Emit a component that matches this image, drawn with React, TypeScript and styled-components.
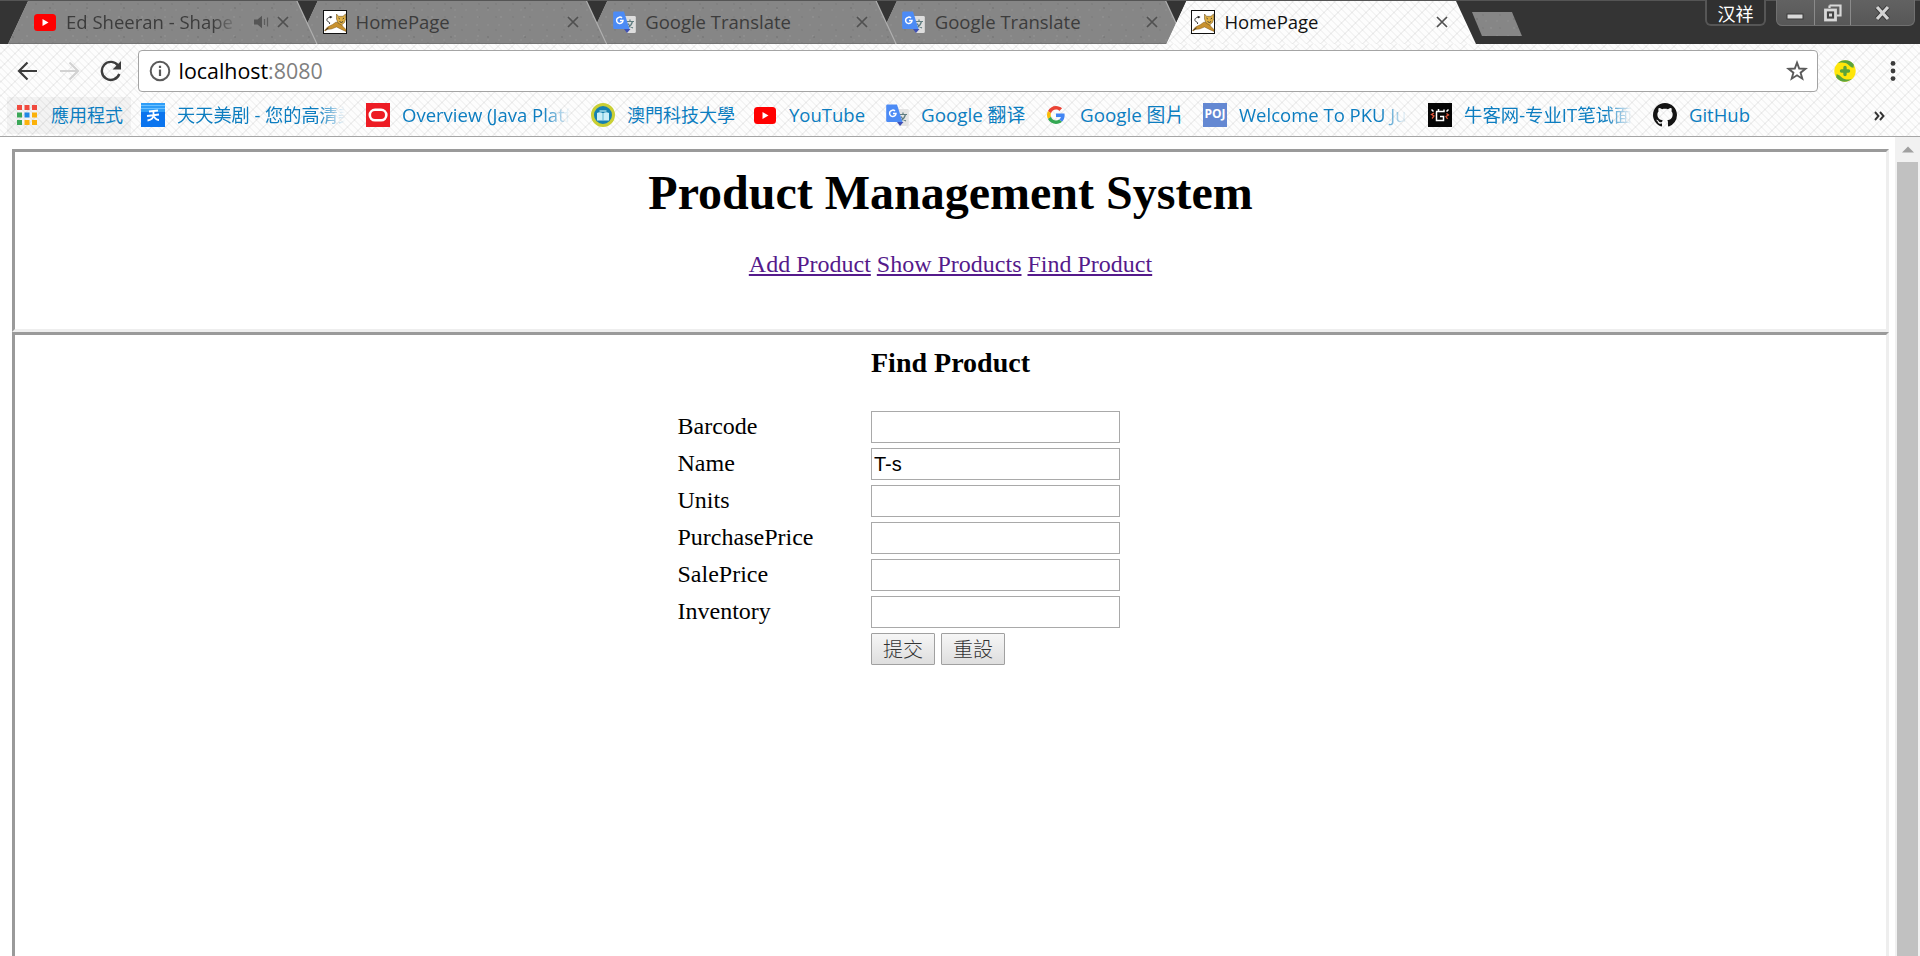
import React from 'react';
import styled, { createGlobalStyle, css } from 'styled-components';

const uiFont = `"Open Sans", "Noto Sans CJK TC", sans-serif`;

const weave = css`
  background-color: #fdfdfd;
  background-image:
    repeating-linear-gradient(45deg, transparent 0 3.8px, rgba(0, 0, 0, 0.035) 3.8px 4.95px),
    repeating-linear-gradient(-45deg, transparent 0 8.6px, rgba(0, 0, 0, 0.05) 8.6px 9.9px);
`;

const stone = css`
  background-color: #868686;
  background-image:
    radial-gradient(circle at 5px 7px, rgba(40, 40, 40, 0.25) 0, transparent 1.3px),
    radial-gradient(circle at 19px 16px, rgba(225, 225, 225, 0.15) 0, transparent 1.6px),
    radial-gradient(circle at 11px 3px, rgba(50, 50, 50, 0.14) 0, transparent 1.4px),
    radial-gradient(circle at 3px 9px, rgba(230, 230, 230, 0.1) 0, transparent 1.6px);
  background-size: 37px 29px, 23px 19px, 17px 13px, 11px 15px;
`;

const GlobalStyle = createGlobalStyle`
  * { box-sizing: border-box; }
  body { margin: 0; background: #fff; overflow: hidden; }
`;

const Window = styled.div`
  display: flex;
  flex-direction: column;
  width: 1920px;
  height: 956px;
  overflow: hidden;
  font-family: ${uiFont};
`;

const TitleBar = styled.header`
  display: flex;
  height: 44px;
  padding-left: 8px;
  background: #343434;
  border-top: 1px solid #555;
`;

const TabShape = styled.div<{ $active?: boolean; $order: number }>`
  position: relative;
  z-index: ${(p) => p.$order};
  flex: none;
  width: 309.6px;
  height: 43px;
  margin-right: -20px;
  padding: 0 1.3px 0 0;
  background: ${(p) => (p.$active ? '#fdfdfd' : '#b0b0b0')};
  clip-path: polygon(0 100%, 20px 0, calc(100% - 20px) 0, 100% 100%);
`;

const TabFace = styled.div<{ $active?: boolean }>`
  display: flex;
  align-items: center;
  height: 100%;
  padding: 0 27px 0 24px;
  color: ${(p) => (p.$active ? '#111' : '#3c3c3c')};
  clip-path: polygon(0 100%, 20px 0, calc(100% - 20px) 0, 100% 100%);
  ${(p) => (p.$active ? weave : stone)}
  border-bottom: 1px solid ${(p) => (p.$active ? 'transparent' : '#757575')};
`;

const TabTitle = styled.span<{ $fade?: boolean }>`
  flex: 1;
  margin-left: 8px;
  font-size: 18.5px;
  line-height: 28px;
  white-space: nowrap;
  ${(p) => p.$fade && 'mask-image: linear-gradient(90deg, #000 82%, transparent 97%);'}
`;

const Slot = styled.span<{ $w: number }>`
  display: flex;
  flex: none;
  align-items: center;
  justify-content: center;
  width: ${(p) => p.$w}px;
`;

const NewTab = styled.div`
  width: 50px;
  height: 24px;
  margin: 11px 0 0 16px;
  clip-path: polygon(0 0, 40px 0, 100% 100%, 10px 100%);
  ${stone}
`;

const WindowButtons = styled.div`
  display: flex;
  align-items: flex-start;
  gap: 10px;
  margin: -1px 5px 0 auto;
`;

const UserButton = styled.div`
  width: 61px;
  height: 26px;
  border: 2px solid #565656;
  border-top: 0;
  border-radius: 0 0 6px 6px;
  background: #303030;
  color: #fff;
  font: 18px/27px "Noto Sans CJK SC", sans-serif;
  text-align: center;
`;

const ControlGroup = styled.div`
  display: flex;
  width: 139px;
  height: 26px;
  border: 1px solid #707070;
  border-top: 0;
  border-radius: 0 0 6px 6px;
  overflow: hidden;
  background: linear-gradient(#626262, #575757);
`;

const Control = styled.div<{ $w: number }>`
  display: flex;
  align-items: center;
  justify-content: center;
  width: ${(p) => p.$w}px;
  & + & {
    border-left: 1px solid #8a8a8a;
  }
`;

const Chrome = styled.section`
  flex: none;
  height: 93px;
  border-bottom: 1px solid #a6a6a6;
  ${weave}
`;

const Toolbar = styled.div`
  display: flex;
  align-items: center;
  height: 54px;
  padding-left: 6px;
`;

const NavButton = styled.span`
  display: flex;
  justify-content: center;
  width: 42px;
`;

const Omnibox = styled.div`
  display: flex;
  align-items: center;
  width: 1680px;
  height: 42px;
  margin-left: 6px;
  padding: 0 9px 0 10px;
  border: 1px solid #a4a4a4;
  border-radius: 4px;
  background: #fff;
`;

const Address = styled.span`
  flex: 1;
  margin-left: 7.5px;
  color: #000;
  font-size: 21.4px;
  line-height: 30px;
  small {
    color: #808080;
    font-size: inherit;
  }
`;

const BookmarkBar = styled.nav`
  display: flex;
  align-items: center;
  height: 34px;
  padding-left: 7px;
`;

const AppsButton = styled.div`
  display: flex;
  align-items: center;
  gap: 14px;
  width: 124px;
  height: 37px;
  margin-right: 10px;
  padding-left: 10px;
  background: rgba(0, 0, 0, 0.04);
  color: #0c7dc0;
  font-size: 18px;
  line-height: 26px;
`;

const Bookmark = styled.div<{ $w: number }>`
  display: flex;
  flex: none;
  align-items: center;
  gap: 12px;
  width: ${(p) => p.$w}px;
`;

const BookmarkTitle = styled.span<{ $size?: number; $fade?: boolean }>`
  max-width: 168px;
  color: #0c7dc0;
  font-size: ${(p) => p.$size ?? 18.5}px;
  line-height: 26px;
  white-space: nowrap;
  ${(p) => p.$fade && 'mask-image: linear-gradient(90deg, #000 84%, transparent 100%);'}
`;

const More = styled.span`
  margin: 0 35px 0 auto;
`;

const Viewport = styled.main`
  display: flex;
  flex: 1;
  min-height: 0;
`;

const Page = styled.div`
  display: flex;
  flex: 1;
  flex-direction: column;
  padding: 12px 6px 0 12px;
  color: #000;
  font-family: 'Liberation Serif', serif;
`;

const Frame = styled.section<{ $h: number }>`
  flex: none;
  height: ${(p) => p.$h}px;
  padding: 12px;
  border: 3px solid;
  border-color: #9a9a9a #eee #eee #9a9a9a;
`;

const PageTitle = styled.h1`
  margin: 1px 0 31px;
  font-size: 48px;
  line-height: 55px;
  text-align: center;
`;

const Links = styled.div`
  font-size: 24px;
  line-height: 27px;
  text-align: center;
  a {
    color: #551a8b;
    text-decoration: underline;
  }
`;

const Form = styled.form`
  display: grid;
  grid-template-columns: 193.5px 249px;
  gap: 5px 0;
  margin-left: 650.5px;
`;

const FormTitle = styled.h3`
  grid-column: 2;
  margin: 0 0 28px;
  font-size: 28px;
  line-height: 31px;
`;

const Label = styled.label`
  font-size: 24px;
  line-height: 31px;
`;

const Field = styled.input`
  width: 249px;
  height: 32px;
  padding: 1px 2px;
  border: 1px solid #a9a9a9;
  border-radius: 0;
  background: #fff;
  outline: 0;
  font: 20px 'Liberation Sans', sans-serif;
`;

const Actions = styled.div`
  display: flex;
  grid-column: 2;
  gap: 6px;
`;

const Button = styled.button`
  width: 64px;
  height: 32px;
  padding: 0;
  border: 1px solid #a0a0a0;
  border-radius: 1px;
  background: linear-gradient(#f6f6f6, #dedede);
  color: #333;
  font: 300 20px/28px 'Noto Sans CJK TC', sans-serif;
`;

const Scrollbar = styled.aside`
  display: flex;
  flex-direction: column;
  align-items: center;
  width: 25px;
  background: #f1f1f1;
`;

const ArrowBox = styled.span`
  display: flex;
  align-items: center;
  justify-content: center;
  height: 25px;
`;

const Thumb = styled.div`
  flex: 1;
  width: 21px;
  background: #c1c1c1;
`;

const YouTubeIcon = () => (
  <svg width="22" height="17" viewBox="0 0 22 17">
    <rect width="22" height="17" rx="3.5" fill="#f00" />
    <path d="M8.5 5v7l6-3.5z" fill="#fff" />
  </svg>
);

const CatIcon = () => (
  <svg width="24" height="24" viewBox="0 0 24 24">
    <rect x=".5" y=".5" width="23" height="23" fill="#fff" stroke="#111" />
    <path d="M1.500 20.500 4.500 17l5-2.500 3.500-2.500 5 1.500 2 3 3 3v2l-3.500-1.500-6-3-5 2-4.500.5-1.500 1.500z" fill="#c8912f" stroke="#6b4a17" strokeWidth=".4" />
    <path d="m13.500 4 2 2.300h4.500L22.500 4l.3 4.500-1.300 4L18.500 15l-3.500-2-1.500-4z" fill="#e0b044" stroke="#5c4318" strokeWidth=".5" />
    <path d="m15.500 8 1.300 1M21 8l-1.300 1M16.500 11.500l1.800 1 1.800-1" stroke="#333" strokeWidth=".9" fill="none" />
    <path d="M8.500 7C5 7.300 3.500 8.500 4 10.500s3.500 1 2.500 3.500M2.500 20l3-2" stroke="#222" strokeWidth=".9" fill="none" />
    <path d="M6.500 5.700 9.500 7 7 8.600z" fill="#222" />
  </svg>
);

const TranslateIcon = ({ dim }: { dim?: boolean }) => (
  <svg width="23" height="23" viewBox="0 0 23 23">
    <path d="M9 5h12.500a1.300 1.300 0 0 1 1.300 1.300v14.500a1.300 1.300 0 0 1-1.300 1.300H14z" fill={dim ? '#e4e4e4' : '#dedede'} />
    <path d="M13.500 10.500h7.500M17 8.500v2M19.500 10.500c-.8 3-2.500 5-5 6.500M15 12.500c1 2 2.500 3.500 5 4.500" stroke="#607d80" strokeWidth="1.200" fill="none" />
    <path d="m11 18 3 4 3.500-4z" fill="#3f51b5" />
    <path d="M1.500.5H11l5.500 17.500h-15A1.300 1.300 0 0 1 .2 16.700V1.800A1.300 1.300 0 0 1 1.500.5z" fill="#4c8bf5" />
    <path d="M9 7a3.200 3.200 0 1 0 1 2.500H7" stroke="#fff" strokeWidth="1.500" fill="none" />
  </svg>
);

const CloseIcon = () => (
  <svg width="12" height="12" viewBox="0 0 12 12">
    <path d="m1 1 10 10M11 1 1 11" stroke="#505050" strokeWidth="1.700" />
  </svg>
);

const AudioIcon = () => (
  <svg width="15" height="14" viewBox="0 0 15 14">
    <path d="M0 4.500h3.500L8 .7v12.600L3.500 9.500H0z" fill="#555" />
    <path d="M10.500 4v6M13.500 2.500v9" stroke="#5c5c5c" strokeWidth="1.200" />
  </svg>
);

const ArrowIcon = ({ color, flip }: { color: string; flip?: boolean }) => (
  <svg width="21" height="20" viewBox="0 0 21 20">
    <path
      d={flip ? 'M1 10h18M10.500 1.500 19 10l-8.500 8.500' : 'M20 10H2M10.500 1.500 2 10l8.500 8.500'}
      stroke={color}
      strokeWidth="2.200"
      fill="none"
    />
  </svg>
);

const ReloadIcon = () => (
  <svg width="22" height="22" viewBox="0 0 22 22">
    <path d="M18.200 5.700A9 9 0 1 0 19.300 14" stroke="#3c3c3c" strokeWidth="2.400" fill="none" />
    <path d="M21 1v8.500h-8.500z" fill="#3c3c3c" />
  </svg>
);

const InfoIcon = () => (
  <svg width="22" height="22" viewBox="0 0 22 22">
    <circle cx="11" cy="11" r="9.300" stroke="#5a5a5a" strokeWidth="2" fill="none" />
    <path d="M11 9.500V16M11 5.700v2.300" stroke="#5a5a5a" strokeWidth="2.200" />
  </svg>
);

const StarIcon = () => (
  <svg width="22" height="22" viewBox="0 0 22 22">
    <path
      d="m11 2.700 2.200 5.800 6.300.3-4.900 3.900 1.700 6-5.300-3.400-5.300 3.400 1.700-6-4.900-3.900 6.300-.3z"
      stroke="#5a5a5a"
      strokeWidth="1.900"
      fill="none"
    />
  </svg>
);

const ExtensionIcon = () => (
  <svg width="22" height="22" viewBox="0 0 22 22">
    <circle cx="11" cy="11" r="10.700" fill="#ffe60a" />
    <path d="M3.500 3.500C8-.8 15.500-1 19.800 4.500L19.500 7.800C16 7.500 15 4.500 11.500 3 8.500 2 5.500 2.500 3.500 3.500zM18.500 18.500c-4.500 4.300-12 4.500-16.300-1l.3-3.300C6 14.500 7 17.500 10.500 19c3 1 6 .5 8-.5z" fill="#5ba33c" />
    <path d="M11 7.500v7M7.500 11h7" stroke="#5ba33c" strokeWidth="3.400" strokeLinecap="round" />
  </svg>
);

const DotsIcon = () => (
  <svg width="6" height="22" viewBox="0 0 6 22">
    {[3.4, 11, 18.6].map((y) => (
      <circle key={y} cx="3" cy={y} r="2.400" fill="#3c3c3c" />
    ))}
  </svg>
);

const appColors = ['#f04a3e', '#f04a3e', '#f04a3e', '#3aa757', '#1e88e5', '#fbb10a', '#3aa757', '#fbb10a', '#fbb10a'];

const AppsIcon = () => (
  <svg width="20" height="20" viewBox="0 0 20 20">
    {appColors.map((c, i) => (
      <rect key={i} x={(i % 3) * 7.5} y={Math.floor(i / 3) * 7.5} width="5" height="5" fill={c} />
    ))}
  </svg>
);

const SkyIcon = () => (
  <svg width="24" height="24" viewBox="0 0 24 24">
    <rect width="24" height="24" fill="#0b74ee" />
    <rect width="24" height="9" fill="#2f9df7" />
    <path d="M0 2.500h24M0 5.500h24" stroke="#6cc1ff" strokeWidth="1" />
    <path d="M8 8.500 17 7.500M6 13l12-1.500M12.500 8v4c0 3-3 5-6 5.500M12.500 12c1 3 3 5 5.500 5" stroke="#fff" strokeWidth="1.800" fill="none" />
  </svg>
);

const OracleIcon = () => (
  <svg width="24" height="24" viewBox="0 0 24 24">
    <rect width="24" height="24" fill="#ed1c24" />
    <rect x="3.800" y="6.800" width="16.500" height="10.500" rx="5.200" stroke="#fff" strokeWidth="2.600" fill="none" />
  </svg>
);

const UniversityIcon = () => (
  <svg width="24" height="24" viewBox="0 0 24 24">
    <circle cx="12" cy="12" r="10.500" fill="#1680b0" stroke="#c9cf35" strokeWidth="3" />
    <path d="M6 10c2-1 4-1 6 .5 2-1.500 4-1.500 6-.5v7.500H6z" fill="#c9eef8" />
    <path d="M12 10.500v7" stroke="#5fb4d0" strokeWidth="1" />
    <path d="M8.500 8h7" stroke="#9fd8e8" strokeWidth="1.500" />
  </svg>
);

const GoogleIcon = () => (
  <svg width="18" height="18" viewBox="0 0 48 48">
    <path fill="#EA4335" d="M24 9.500c3.540 0 6.710 1.220 9.210 3.600l6.850-6.850C35.900 2.380 30.470 0 24 0 14.620 0 6.510 5.380 2.560 13.220l7.980 6.190C12.430 13.720 17.740 9.500 24 9.500z" />
    <path fill="#4285F4" d="M46.980 24.550c0-1.570-.15-3.090-.38-4.550H24v9.020h12.940c-.58 2.960-2.260 5.480-4.780 7.180l7.730 6c4.510-4.180 7.090-10.360 7.090-17.650z" />
    <path fill="#FBBC05" d="M10.530 28.590c-.48-1.450-.76-2.990-.76-4.590s.27-3.140.76-4.590l-7.980-6.190C.92 16.460 0 20.120 0 24s.92 7.540 2.560 10.780l7.970-6.190z" />
    <path fill="#34A853" d="M24 48c6.480 0 11.930-2.130 15.890-5.810l-7.730-6c-2.150 1.450-4.920 2.300-8.160 2.300-6.260 0-11.570-4.220-13.470-9.910l-7.980 6.190C6.510 42.620 14.620 48 24 48z" />
  </svg>
);

const PojBadge = styled.span`
  display: flex;
  justify-content: center;
  width: 24px;
  height: 24px;
  background: #6488d2;
  color: #fff;
  font: bold 12px/22px 'Open Sans', sans-serif;
`;

const NowcoderIcon = () => (
  <svg width="24" height="24" viewBox="0 0 24 24">
    <rect width="24" height="24" fill="#060606" />
    <path d="M8.500 8.500v9h7v-4H12M8 8.500h8V6.500M10.500 8V6M5.500 8.500 3.500 6.500M18.500 8.500l2-2" stroke="#fff" strokeWidth="1.500" fill="none" />
    <path d="m6 10-2.500 1.500L6 13l-2 2.500M18.500 10.500l2 1.500-2.500 1.500 1.500 2.500" stroke="#e0573b" strokeWidth="1.300" fill="none" />
  </svg>
);

const GitHubIcon = () => (
  <svg width="24" height="24" viewBox="0 0 16 16">
    <path
      fill="#141414"
      d="M8 0C3.580 0 0 3.580 0 8c0 3.540 2.290 6.530 5.470 7.590.4.070.55-.17.55-.38 0-.19-.01-.82-.01-1.490-2.010.37-2.530-.49-2.690-.94-.09-.23-.48-.94-.82-1.130-.28-.15-.68-.52-.01-.53.63-.01 1.080.58 1.230.82.72 1.210 1.870.87 2.330.66.07-.52.28-.87.51-1.070-1.780-.2-3.640-.89-3.640-3.950 0-.87.31-1.590.82-2.150-.08-.2-.36-1.020.08-2.120 0 0 .67-.21 2.200.82.64-.18 1.320-.27 2-.27s1.360.09 2 .27c1.530-1.040 2.200-.82 2.200-.82.44 1.100.16 1.920.08 2.120.51.56.82 1.270.82 2.150 0 3.070-1.870 3.750-3.650 3.950.29.25.54.73.54 1.480 0 1.070-.01 1.930-.01 2.200 0 .21.15.46.55.38A8.010 8.010 0 0 0 16 8c0-4.420-3.580-8-8-8z"
    />
  </svg>
);

const tabs = [
  { title: 'Ed Sheeran - Shape', icon: <YouTubeIcon />, audio: true },
  { title: 'HomePage', icon: <CatIcon /> },
  { title: 'Google Translate', icon: <TranslateIcon /> },
  { title: 'Google Translate', icon: <TranslateIcon /> },
  { title: 'HomePage', icon: <CatIcon />, active: true },
];

const bookmarks = [
  { title: '天天美剧 - 您的高清美', icon: <SkyIcon />, w: 225, size: 18.2, fade: true },
  { title: 'Overview (Java Platf', icon: <OracleIcon />, w: 225, fade: true },
  { title: '澳門科技大學', icon: <UniversityIcon />, w: 162, size: 18 },
  { title: 'YouTube', icon: <YouTubeIcon />, w: 132 },
  { title: 'Google 翻译', icon: <TranslateIcon dim />, w: 159, size: 18.8 },
  { title: 'Google 图片', icon: <GoogleIcon />, w: 159, size: 18.8 },
  { title: 'Welcome To PKU Ju', icon: <PojBadge>POJ</PojBadge>, w: 225, fade: true },
  { title: '牛客网-专业IT笔试面', icon: <NowcoderIcon />, w: 225, size: 18.4, fade: true },
  { title: 'GitHub', icon: <GitHubIcon />, w: 150 },
];

const fields = [
  ['Barcode', ''],
  ['Name', 'T-s'],
  ['Units', ''],
  ['PurchasePrice', ''],
  ['SalePrice', ''],
  ['Inventory', ''],
];

export default function App() {
  return (
    <Window>
      <GlobalStyle />
      <TitleBar>
        {tabs.map((t, i) => (
          <TabShape key={i} $active={t.active} $order={t.active ? 9 : 5 - i}>
            <TabFace $active={t.active}>
              <Slot $w={26}>{t.icon}</Slot>
              <TabTitle $fade={t.audio}>{t.title}</TabTitle>
              {t.audio && <Slot $w={32}><AudioIcon /></Slot>}
              <Slot $w={12}><CloseIcon /></Slot>
            </TabFace>
          </TabShape>
        ))}
        <NewTab />
        <WindowButtons>
          <UserButton>汉祥</UserButton>
          <ControlGroup>
            <Control $w={37}>
              <svg width="18" height="20" viewBox="0 0 18 20"><rect x="1" y="11" width="16" height="5" fill="#d8d8d8" stroke="#3a3a3a" /></svg>
            </Control>
            <Control $w={37}>
              <svg width="20" height="20" viewBox="0 0 20 20">
                <path d="M6.500 2.500h11v10H14M6.500 2.500V5" stroke="#d8d8d8" strokeWidth="2.200" fill="none" />
                <rect x="2.500" y="7" width="10" height="10" stroke="#d8d8d8" strokeWidth="2.800" fill="#444" />
                <rect x="6" y="10.500" width="3" height="3" fill="#d8d8d8" />
              </svg>
            </Control>
            <Control $w={64}>
              <svg width="18" height="16" viewBox="0 0 18 16">
                <path d="m3 2 11 12M14 2 3 14" stroke="#3a3a3a" strokeWidth="5" />
                <path d="m3 2 11 12M14 2 3 14" stroke="#d4d4d4" strokeWidth="3.200" />
              </svg>
            </Control>
          </ControlGroup>
        </WindowButtons>
      </TitleBar>
      <Chrome>
        <Toolbar>
          <NavButton><ArrowIcon color="#3c3c3c" /></NavButton>
          <NavButton><ArrowIcon color="#d2d2d2" flip /></NavButton>
          <NavButton><ReloadIcon /></NavButton>
          <Omnibox>
            <InfoIcon />
            <Address>localhost<small>:8080</small></Address>
            <StarIcon />
          </Omnibox>
          <Slot $w={54}><ExtensionIcon /></Slot>
          <Slot $w={41}><DotsIcon /></Slot>
        </Toolbar>
        <BookmarkBar>
          <AppsButton><AppsIcon />應用程式</AppsButton>
          {bookmarks.map((b) => (
            <Bookmark key={b.title} $w={b.w}>
              <Slot $w={24}>{b.icon}</Slot>
              <BookmarkTitle $size={b.size} $fade={b.fade}>{b.title}</BookmarkTitle>
            </Bookmark>
          ))}
          <More>
            <svg width="11" height="10" viewBox="0 0 11 10">
              <path d="m1 1 3.500 4L1 9M6 1l3.500 4L6 9" stroke="#333" strokeWidth="1.900" fill="none" />
            </svg>
          </More>
        </BookmarkBar>
      </Chrome>
      <Viewport>
        <Page>
          <Frame $h={183}>
            <PageTitle>Product Management System</PageTitle>
            <Links>
              <a>Add Product</a> <a>Show Products</a> <a>Find Product</a>
            </Links>
          </Frame>
          <Frame $h={700}>
            <Form>
              <FormTitle>Find Product</FormTitle>
              {fields.map(([name, value]) => (
                <React.Fragment key={name}>
                  <Label>{name}</Label>
                  <Field defaultValue={value} />
                </React.Fragment>
              ))}
              <Actions>
                <Button type="button">提交</Button>
                <Button type="button">重設</Button>
              </Actions>
            </Form>
          </Frame>
        </Page>
        <Scrollbar>
          <ArrowBox>
            <svg width="12" height="7" viewBox="0 0 12 7"><path d="M6 .5 12 6.500H0z" fill="#a0a0a0" /></svg>
          </ArrowBox>
          <Thumb />
        </Scrollbar>
      </Viewport>
    </Window>
  );
}
